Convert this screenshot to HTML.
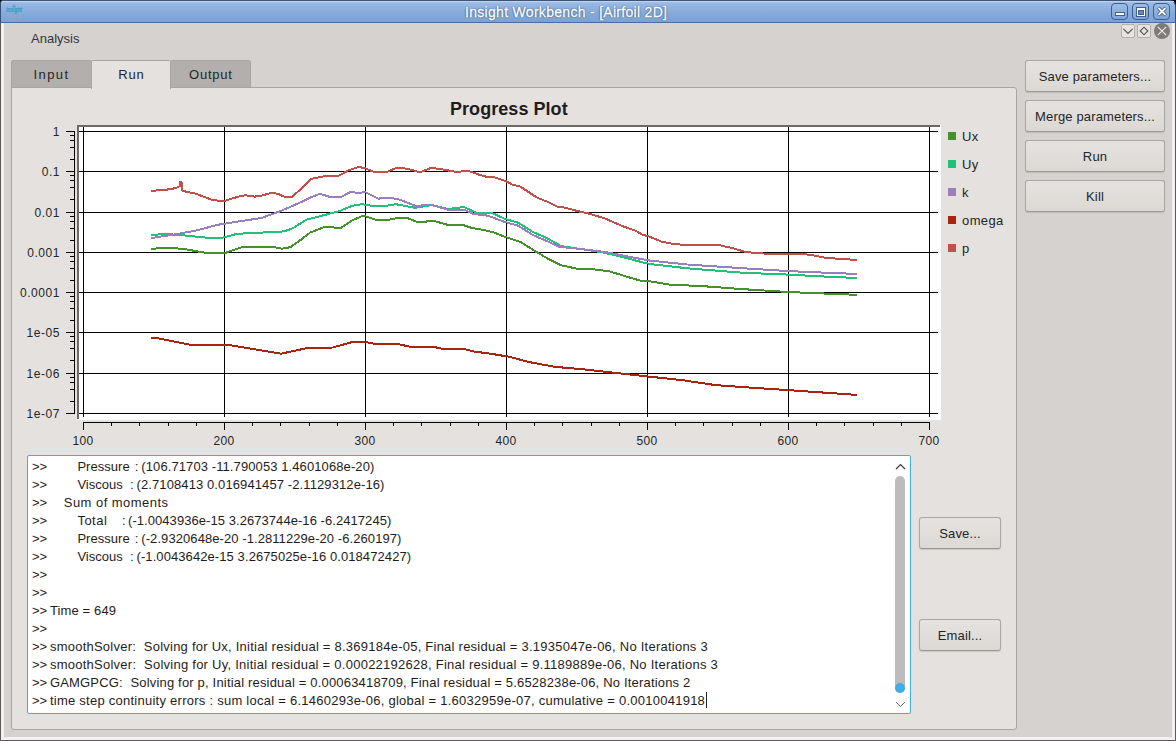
<!DOCTYPE html>
<html><head><meta charset="utf-8">
<style>
*{margin:0;padding:0;box-sizing:border-box}
html,body{width:1176px;height:741px;overflow:hidden;background:#d6d2cf;font-family:"Liberation Sans",sans-serif;color:#232629}
.abs{position:absolute}
#frameL{position:absolute;left:0;top:23px;width:1px;height:718px;background:#5f5b58}
#frameL2{position:absolute;left:1px;top:23px;width:3px;height:715px;background:#f3f1ef}
#frameR{position:absolute;left:1175px;top:23px;width:1px;height:718px;background:#5f5b58}
#frameR2{position:absolute;left:1172px;top:23px;width:3px;height:715px;background:#f3f1ef}
#frameB{position:absolute;left:0;top:740px;width:1176px;height:1px;background:#5f5b58}
#frameB2{position:absolute;left:1px;top:737px;width:1174px;height:3px;background:#f3f1ef}
#title{position:absolute;left:0;top:0;width:1176px;height:23px;background:linear-gradient(#a7c3ea 0px,#98b8e4 3px,#86aadb 12px,#7aa0d6 22px);border-top:1px solid #3d5575;border-bottom:1px solid #4a6fa3;border-left:1px solid #344f75;border-right:1px solid #344f75;border-radius:3px 6px 0 0}
#title .hl{position:absolute;left:1px;top:0;right:1px;height:1px;background:#bcd3f2}
#ttext{position:absolute;left:465px;top:4px;font-size:14px;color:#fff;white-space:nowrap;letter-spacing:0.3px;-webkit-text-stroke:0.35px #fff;text-shadow:0 0 1px #24477a,0 0 1px #24477a,0 0 2px #355a90}
.tb{position:absolute;top:3px;width:17px;height:17px;border:1px solid #3f5f8c;border-radius:4px;background:linear-gradient(#9dbbe5,#7fa4d7)}
.menu{position:absolute;left:31px;top:31px;font-size:13px;color:#31363b}
.mdib{position:absolute;top:24px;width:13px;height:14px;border:1px solid #b3afab;border-radius:2px;background:#e6e3e0}
#mdiclose{position:absolute;left:1154px;top:23px;width:16px;height:16px;border-radius:50%;background:#7e7a77}
.tab{position:absolute;top:60px;height:28px;background:#b3afac;border:1px solid #a9a5a1;border-bottom:none;border-radius:3px 3px 0 0;font-size:13px;color:#232629;text-align:center;line-height:27px;letter-spacing:0.75px;text-indent:0.75px}
#pane{position:absolute;left:11px;top:87px;width:1006px;height:643px;background:#e4e1de;border:1px solid #a9a5a1;border-radius:0 3px 3px 3px}
#ptitle{position:absolute;left:450px;top:99px;font-size:18px;font-weight:bold;color:#1f1c1b;white-space:nowrap;letter-spacing:0.05px}
.yl{position:absolute;left:0;width:60px;text-align:right;font-size:12px;line-height:18px;color:#232629;letter-spacing:0.55px}
.xl{position:absolute;top:432px;width:60px;text-align:center;font-size:12px;line-height:18px;color:#232629;letter-spacing:0.3px}
.lg{position:absolute;left:962px;font-size:13px;line-height:18px;color:#232629;letter-spacing:0.4px}
#ta{position:absolute;left:27px;top:455px;width:884px;height:259px;background:#fff;border:1px solid #3daee9;border-radius:2px}
.tl{position:absolute;font-size:13px;line-height:16px;white-space:pre;color:#1f1c1b}
.btn{position:absolute;height:32px;border:1px solid #aaa6a2;border-bottom-color:#9d9995;border-radius:3px;background:linear-gradient(#e5e2df,#dcd9d5);box-shadow:0 1px 1px rgba(0,0,0,0.12);font-size:13px;color:#232629;text-align:center;line-height:31px;white-space:nowrap;letter-spacing:0.15px}
#sgroove{position:absolute;left:895px;top:476px;width:10px;height:217px;border-radius:5px;background:#bcbcbc}
#shandle{position:absolute;left:895px;top:683px;width:10px;height:10px;border-radius:5px;background:#3daee9}
</style></head><body>
<div class="abs" style="left:0;top:0;width:6px;height:6px;background:#000"></div><div class="abs" style="left:1168px;top:0;width:8px;height:8px;background:#000"></div>
<div id="title"><div class="hl"></div></div>
<svg class="abs" style="left:0;top:0" width="30" height="23">
  <path d="M14 4.2 L16.3 6.4 L15.3 6.4 L15.3 7.6 L12.7 7.6 L12.7 6.4 L11.7 6.4 Z" fill="#3aa6c4" opacity="0.7"/>
  <text x="6" y="12.2" font-family="Liberation Sans" font-style="italic" font-weight="bold" font-size="6.6" textLength="16" lengthAdjust="spacingAndGlyphs" fill="#1f9dbb">insight</text>
  <text x="6" y="17.6" font-family="Liberation Sans" font-size="6.2" textLength="16" lengthAdjust="spacing" fill="#b4a898" opacity="0.75">CAE</text>
</svg>
<div id="ttext">Insight Workbench - [Airfoil 2D]</div>
<div class="tb" style="left:1111px"><div class="abs" style="left:3px;top:8px;width:10px;height:4px;background:#fff;border:1px solid #3f5f8c"></div></div>
<div class="tb" style="left:1132px"><div class="abs" style="left:3px;top:3px;width:10px;height:10px;background:#fff;border:1px solid #3f5f8c"><div class="abs" style="left:1px;top:2px;width:6px;height:5px;background:#6189be;border:1px solid #3f5f8c"></div></div></div>
<div class="tb" style="left:1153px"><svg class="abs" style="left:0;top:0" width="15" height="15"><path d="M4.3 3.8 L11.7 11.2 M11.7 3.8 L4.3 11.2" stroke="#3f5f8c" stroke-width="3.6"/><path d="M4.6 4.1 L11.4 10.9 M11.4 4.1 L4.6 10.9" stroke="#fff" stroke-width="2"/></svg></div>
<div id="frameL"></div><div id="frameR"></div><div id="frameB"></div>
<div id="frameL2"></div><div id="frameR2"></div><div id="frameB2"></div>

<div class="menu">Analysis</div>
<div class="mdib" style="left:1121px;width:14px"><svg class="abs" style="left:0;top:0" width="12" height="12"><path d="M1.4 3.8 L6 8.4 L10.6 3.8" stroke="#5a5652" fill="none" stroke-width="1.2"/></svg></div>
<div class="mdib" style="left:1137px;width:14px"><svg class="abs" style="left:0;top:0" width="12" height="12"><path d="M6 2.2 L9.8 6 L6 9.8 L2.2 6 Z" stroke="#5a5652" fill="none" stroke-width="1.15"/></svg></div>
<div id="mdiclose"><svg class="abs" style="left:0;top:0" width="16" height="16"><path d="M3.8 3.8 L12.2 12.2 M12.2 3.8 L3.8 12.2" stroke="#eeeeee" fill="none" stroke-width="1.1"/></svg></div>

<div class="tab" style="left:11px;width:81px;letter-spacing:1.4px;text-indent:0px">Input</div>
<div class="tab" style="left:170px;width:81px">Output</div>
<div id="pane"></div>
<div class="tab" style="left:91px;width:80px;top:60px;height:29px;background:#e4e1de;border:1px solid #a9a5a1;border-bottom:none;border-radius:2px 2px 0 0;line-height:27px">Run</div>

<div id="ptitle">Progress Plot</div>
<svg class="abs" style="left:0;top:0" width="1176" height="741">
<rect x="77" y="125" width="864" height="295" fill="#ffffff"/>
<rect x="77" y="125" width="863" height="2" fill="#6f6965"/>
<rect x="77" y="125" width="2" height="294" fill="#6f6965"/>
<rect x="83" y="127" width="1" height="290" fill="#000"/>
<rect x="224" y="127" width="1" height="290" fill="#000"/>
<rect x="365" y="127" width="1" height="290" fill="#000"/>
<rect x="506" y="127" width="1" height="290" fill="#000"/>
<rect x="647" y="127" width="1" height="290" fill="#000"/>
<rect x="788" y="127" width="1" height="290" fill="#000"/>
<rect x="929" y="127" width="1" height="290" fill="#000"/>
<rect x="79" y="131" width="859" height="1" fill="#000"/>
<rect x="79" y="171" width="859" height="1" fill="#000"/>
<rect x="79" y="212" width="859" height="1" fill="#000"/>
<rect x="79" y="252" width="859" height="1" fill="#000"/>
<rect x="79" y="292" width="859" height="1" fill="#000"/>
<rect x="79" y="332" width="859" height="1" fill="#000"/>
<rect x="79" y="373" width="859" height="1" fill="#000"/>
<rect x="79" y="413" width="859" height="1" fill="#000"/>
<polyline points="151.0,248.7 172.4,247.9 187.0,249.5 208.0,253.3 224.2,253.3 242.0,247.1 274.3,247.1 282.4,248.7 290.5,247.1 301.9,239.0 310.0,232.6 324.6,226.9 340.8,228.0 352.0,220.4 363.4,215.6 378.0,220.4 386.0,220.4 399.0,217.7 407.1,218.0 418.4,222.5 433.0,220.7 447.6,224.8 463.8,225.3 471.9,228.0 480.0,229.2 492.1,231.9 504.3,236.5 520.5,242.0 536.7,252.1 548.8,259.2 561.0,265.3 577.2,268.7 593.4,269.3 609.6,271.4 625.8,276.4 642.0,281.1 650.0,281.4 668.7,284.5 706.1,286.4 743.5,289.2 788.4,292.0 818.4,293.3 856.7,294.8" fill="none" stroke="#45922c" stroke-width="2" stroke-linejoin="round" shape-rendering="crispEdges"/>
<polyline points="151.0,234.7 169.0,234.2 188.6,235.8 214.5,238.5 224.0,237.4 237.0,233.8 261.4,232.6 284.0,231.4 292.2,228.5 306.7,219.6 310.0,218.8 339.1,211.2 352.0,205.8 361.8,204.2 371.5,205.8 386.0,205.8 395.8,204.2 415.2,207.8 431.4,205.0 447.6,209.0 463.8,207.0 476.7,212.8 492.1,213.0 504.3,218.7 518.5,222.8 532.6,231.9 546.8,238.0 561.0,246.0 581.2,249.1 601.5,252.1 621.7,256.8 642.0,262.2 650.0,264.0 687.4,268.3 743.5,272.8 788.4,274.6 827.7,276.7 856.7,278.0" fill="none" stroke="#1fc276" stroke-width="2" stroke-linejoin="round" shape-rendering="crispEdges"/>
<polyline points="151.0,238.2 180.5,233.4 196.7,230.4 217.7,224.8 237.0,221.7 261.4,218.0 280.8,211.0 301.9,201.8 310.0,197.8 319.7,193.7 331.0,197.3 340.8,197.0 350.5,192.1 358.6,192.9 365.0,192.1 378.0,198.6 391.0,197.8 400.6,199.9 415.2,205.8 431.4,205.0 447.6,209.6 463.8,209.6 473.5,213.9 488.1,215.7 504.3,221.8 518.5,225.8 532.6,234.9 546.8,241.0 559.0,246.7 581.2,249.1 605.5,252.1 642.0,259.2 650.0,260.6 687.4,264.5 743.5,268.3 788.4,271.1 827.7,272.8 856.7,273.9" fill="none" stroke="#9a7fc0" stroke-width="2" stroke-linejoin="round" shape-rendering="crispEdges"/>
<polyline points="150.7,337.8 158.4,338.4 189.0,344.5 225.7,344.5 280.8,353.7 305.3,348.5 332.8,347.5 351.2,342.3 365.0,342.0 378.8,344.5 397.1,343.9 409.4,346.6 433.8,346.9 443.0,349.0 464.5,349.0 473.6,351.5 490.0,353.6 509.4,356.8 528.8,362.0 554.6,366.8 586.9,369.7 619.2,373.3 648.3,376.5 683.9,380.4 716.2,385.2 748.5,387.5 788.2,390.1 819.6,392.3 856.7,394.9" fill="none" stroke="#a8240f" stroke-width="2" stroke-linejoin="round" shape-rendering="crispEdges"/>
<polyline points="151.0,190.8 163.5,190.1 172.4,188.8 178.0,187.2 180.0,186.0 180.5,181.6 181.5,181.6 182.4,190.5 187.0,192.0 195.0,193.4 212.8,200.2 224.2,201.0 237.0,197.0 245.0,195.3 255.0,196.6 263.0,195.3 271.0,192.9 277.6,193.7 284.0,196.6 292.0,197.0 301.9,188.0 311.6,178.8 324.6,176.2 339.1,175.6 348.8,170.2 358.6,167.0 365.0,168.1 374.7,172.3 386.0,172.3 395.8,168.1 407.1,168.6 420.0,172.3 431.4,167.8 442.7,169.4 455.7,171.9 468.6,171.0 480.0,175.0 486.0,176.6 494.2,177.2 506.3,181.3 512.4,184.7 520.5,186.7 536.7,197.5 546.8,201.5 557.0,206.6 565.0,207.6 577.2,211.0 589.3,213.7 605.5,218.7 621.7,225.8 635.9,230.9 642.0,234.5 650.0,236.9 661.2,241.5 672.5,243.8 681.8,244.7 717.4,244.7 732.3,248.1 743.5,251.4 756.6,253.3 779.1,254.0 792.2,253.7 809.0,254.6 825.9,257.8 837.1,258.7 856.7,259.9" fill="none" stroke="#c2504a" stroke-width="2" stroke-linejoin="round" shape-rendering="crispEdges"/>
<rect x="74" y="131" width="1" height="283" fill="#000"/>
<rect x="66" y="131" width="8" height="1" fill="#000"/>
<rect x="70" y="135" width="4" height="1" fill="#000"/>
<rect x="70" y="140" width="4" height="1" fill="#000"/>
<rect x="70" y="147" width="4" height="1" fill="#000"/>
<rect x="70" y="159" width="4" height="1" fill="#000"/>
<rect x="66" y="171" width="8" height="1" fill="#000"/>
<rect x="70" y="175" width="4" height="1" fill="#000"/>
<rect x="70" y="180" width="4" height="1" fill="#000"/>
<rect x="70" y="187" width="4" height="1" fill="#000"/>
<rect x="70" y="199" width="4" height="1" fill="#000"/>
<rect x="66" y="212" width="8" height="1" fill="#000"/>
<rect x="70" y="216" width="4" height="1" fill="#000"/>
<rect x="70" y="221" width="4" height="1" fill="#000"/>
<rect x="70" y="228" width="4" height="1" fill="#000"/>
<rect x="70" y="240" width="4" height="1" fill="#000"/>
<rect x="66" y="252" width="8" height="1" fill="#000"/>
<rect x="70" y="256" width="4" height="1" fill="#000"/>
<rect x="70" y="261" width="4" height="1" fill="#000"/>
<rect x="70" y="268" width="4" height="1" fill="#000"/>
<rect x="70" y="280" width="4" height="1" fill="#000"/>
<rect x="66" y="292" width="8" height="1" fill="#000"/>
<rect x="70" y="296" width="4" height="1" fill="#000"/>
<rect x="70" y="301" width="4" height="1" fill="#000"/>
<rect x="70" y="308" width="4" height="1" fill="#000"/>
<rect x="70" y="320" width="4" height="1" fill="#000"/>
<rect x="66" y="332" width="8" height="1" fill="#000"/>
<rect x="70" y="336" width="4" height="1" fill="#000"/>
<rect x="70" y="341" width="4" height="1" fill="#000"/>
<rect x="70" y="348" width="4" height="1" fill="#000"/>
<rect x="70" y="360" width="4" height="1" fill="#000"/>
<rect x="66" y="373" width="8" height="1" fill="#000"/>
<rect x="70" y="377" width="4" height="1" fill="#000"/>
<rect x="70" y="382" width="4" height="1" fill="#000"/>
<rect x="70" y="389" width="4" height="1" fill="#000"/>
<rect x="70" y="401" width="4" height="1" fill="#000"/>
<rect x="66" y="413" width="8" height="1" fill="#000"/>
<rect x="83" y="422" width="847" height="1" fill="#000"/>
<rect x="83" y="422" width="1" height="8" fill="#000"/>
<rect x="111" y="422" width="1" height="4" fill="#000"/>
<rect x="139" y="422" width="1" height="4" fill="#000"/>
<rect x="168" y="422" width="1" height="4" fill="#000"/>
<rect x="196" y="422" width="1" height="4" fill="#000"/>
<rect x="224" y="422" width="1" height="8" fill="#000"/>
<rect x="252" y="422" width="1" height="4" fill="#000"/>
<rect x="280" y="422" width="1" height="4" fill="#000"/>
<rect x="309" y="422" width="1" height="4" fill="#000"/>
<rect x="337" y="422" width="1" height="4" fill="#000"/>
<rect x="365" y="422" width="1" height="8" fill="#000"/>
<rect x="393" y="422" width="1" height="4" fill="#000"/>
<rect x="421" y="422" width="1" height="4" fill="#000"/>
<rect x="450" y="422" width="1" height="4" fill="#000"/>
<rect x="478" y="422" width="1" height="4" fill="#000"/>
<rect x="506" y="422" width="1" height="8" fill="#000"/>
<rect x="534" y="422" width="1" height="4" fill="#000"/>
<rect x="562" y="422" width="1" height="4" fill="#000"/>
<rect x="591" y="422" width="1" height="4" fill="#000"/>
<rect x="619" y="422" width="1" height="4" fill="#000"/>
<rect x="647" y="422" width="1" height="8" fill="#000"/>
<rect x="675" y="422" width="1" height="4" fill="#000"/>
<rect x="703" y="422" width="1" height="4" fill="#000"/>
<rect x="732" y="422" width="1" height="4" fill="#000"/>
<rect x="760" y="422" width="1" height="4" fill="#000"/>
<rect x="788" y="422" width="1" height="8" fill="#000"/>
<rect x="816" y="422" width="1" height="4" fill="#000"/>
<rect x="844" y="422" width="1" height="4" fill="#000"/>
<rect x="873" y="422" width="1" height="4" fill="#000"/>
<rect x="901" y="422" width="1" height="4" fill="#000"/>
<rect x="929" y="422" width="1" height="8" fill="#000"/>
<rect x="948.5" y="132.5" width="7" height="7" fill="#45922c" stroke="#45922c" stroke-width="1"/>
<rect x="948.5" y="160.5" width="7" height="7" fill="#1fc276" stroke="#1fc276" stroke-width="1"/>
<rect x="948.5" y="188.5" width="7" height="7" fill="#9a7fc0" stroke="#9a7fc0" stroke-width="1"/>
<rect x="948.5" y="216.5" width="7" height="7" fill="#a8240f" stroke="#a8240f" stroke-width="1"/>
<rect x="948.5" y="244.5" width="7" height="7" fill="#c2504a" stroke="#c2504a" stroke-width="1"/>
</svg>
<div class="yl" style="top:123px">1</div>
<div class="yl" style="top:163px">0.1</div>
<div class="yl" style="top:204px">0.01</div>
<div class="yl" style="top:244px">0.001</div>
<div class="yl" style="top:284px">0.0001</div>
<div class="yl" style="top:324px">1e-05</div>
<div class="yl" style="top:365px">1e-06</div>
<div class="yl" style="top:405px">1e-07</div>
<div class="xl" style="left:53px">100</div>
<div class="xl" style="left:194px">200</div>
<div class="xl" style="left:335px">300</div>
<div class="xl" style="left:476px">400</div>
<div class="xl" style="left:617px">500</div>
<div class="xl" style="left:758px">600</div>
<div class="xl" style="left:899px">700</div>
<div class="lg" style="top:128px">Ux</div>
<div class="lg" style="top:156px">Uy</div>
<div class="lg" style="top:184px">k</div>
<div class="lg" style="top:212px">omega</div>
<div class="lg" style="top:240px">p</div>

<div class="btn" style="left:1025px;top:60px;width:140px">Save parameters...</div>
<div class="btn" style="left:1025px;top:100px;width:140px">Merge parameters...</div>
<div class="btn" style="left:1025px;top:140px;width:140px">Run</div>
<div class="btn" style="left:1025px;top:180px;width:140px">Kill</div>

<div id="ta"></div>
<div class="tl" style="left:32px;top:458.6px;letter-spacing:0.000px">&gt;&gt;</div>
<div class="tl" style="left:32px;top:476.6px;letter-spacing:0.000px">&gt;&gt;</div>
<div class="tl" style="left:32px;top:494.6px;letter-spacing:0.000px">&gt;&gt;</div>
<div class="tl" style="left:32px;top:512.6px;letter-spacing:0.000px">&gt;&gt;</div>
<div class="tl" style="left:32px;top:530.6px;letter-spacing:0.000px">&gt;&gt;</div>
<div class="tl" style="left:32px;top:548.6px;letter-spacing:0.000px">&gt;&gt;</div>
<div class="tl" style="left:32px;top:566.6px;letter-spacing:0.000px">&gt;&gt;</div>
<div class="tl" style="left:32px;top:584.6px;letter-spacing:0.000px">&gt;&gt;</div>
<div class="tl" style="left:32px;top:602.6px;letter-spacing:0.000px">&gt;&gt;</div>
<div class="tl" style="left:32px;top:620.6px;letter-spacing:0.000px">&gt;&gt;</div>
<div class="tl" style="left:32px;top:638.6px;letter-spacing:0.000px">&gt;&gt;</div>
<div class="tl" style="left:32px;top:656.6px;letter-spacing:0.000px">&gt;&gt;</div>
<div class="tl" style="left:32px;top:674.6px;letter-spacing:0.000px">&gt;&gt;</div>
<div class="tl" style="left:32px;top:692.6px;letter-spacing:0.000px">&gt;&gt;</div>
<div class="tl" style="left:77.4px;top:458.6px;letter-spacing:0.040px">Pressure</div>
<div class="tl" style="left:134.8px;top:458.6px;letter-spacing:0.000px">:</div>
<div class="tl" style="left:141.3px;top:458.6px;letter-spacing:0.097px">(106.71703 -11.790053 1.4601068e-20)</div>
<div class="tl" style="left:77.4px;top:476.6px;letter-spacing:0.000px">Viscous</div>
<div class="tl" style="left:130px;top:476.6px;letter-spacing:0.000px">:</div>
<div class="tl" style="left:136.5px;top:476.6px;letter-spacing:0.103px">(2.7108413 0.016941457 -2.1129312e-16)</div>
<div class="tl" style="left:63.8px;top:494.6px;letter-spacing:0.457px">Sum of moments</div>
<div class="tl" style="left:77.4px;top:512.6px;letter-spacing:0.485px">Total</div>
<div class="tl" style="left:122px;top:512.6px;letter-spacing:0.000px">:</div>
<div class="tl" style="left:128px;top:512.6px;letter-spacing:0.059px">(-1.0043936e-15 3.2673744e-16 -6.2417245)</div>
<div class="tl" style="left:77.4px;top:530.6px;letter-spacing:0.040px">Pressure</div>
<div class="tl" style="left:134.8px;top:530.6px;letter-spacing:0.000px">:</div>
<div class="tl" style="left:141.3px;top:530.6px;letter-spacing:0.076px">(-2.9320648e-20 -1.2811229e-20 -6.260197)</div>
<div class="tl" style="left:77.4px;top:548.6px;letter-spacing:0.000px">Viscous</div>
<div class="tl" style="left:130px;top:548.6px;letter-spacing:0.000px">:</div>
<div class="tl" style="left:136.5px;top:548.6px;letter-spacing:0.086px">(-1.0043642e-15 3.2675025e-16 0.018472427)</div>
<div class="tl" style="left:49.9px;top:602.6px;letter-spacing:0.132px">Time = 649</div>
<div class="tl" style="left:49.9px;top:638.6px;letter-spacing:0.238px">smoothSolver:  Solving for Ux, Initial residual = 8.369184e-05, Final residual = 3.1935047e-06, No Iterations 3</div>
<div class="tl" style="left:49.9px;top:656.6px;letter-spacing:0.253px">smoothSolver:  Solving for Uy, Initial residual = 0.00022192628, Final residual = 9.1189889e-06, No Iterations 3</div>
<div class="tl" style="left:49.9px;top:674.6px;letter-spacing:0.180px">GAMGPCG:  Solving for p, Initial residual = 0.00063418709, Final residual = 5.6528238e-06, No Iterations 2</div>
<div class="tl" style="left:49.9px;top:692.6px;letter-spacing:0.253px">time step continuity errors : sum local = 6.1460293e-06, global = 1.6032959e-07, cumulative = 0.0010041918</div>
<div id="sgroove"></div>
<div id="shandle"></div>
<div class="abs" style="left:706px;top:692px;width:1px;height:16px;background:#232629"></div>
<svg class="abs" style="left:895px;top:462px" width="12" height="10"><path d="M1 7 L5.5 2.5 L10 7" stroke="#3b3b3b" fill="none" stroke-width="1.2"/></svg>
<svg class="abs" style="left:895px;top:699px" width="12" height="10"><path d="M1 3 L5.5 7.5 L10 3" stroke="#6b6b6b" fill="none" stroke-width="1"/></svg>

<div class="btn" style="left:919px;top:517px;width:82px">Save...</div>
<div class="btn" style="left:919px;top:619px;width:82px">Email...</div>
</body></html>
